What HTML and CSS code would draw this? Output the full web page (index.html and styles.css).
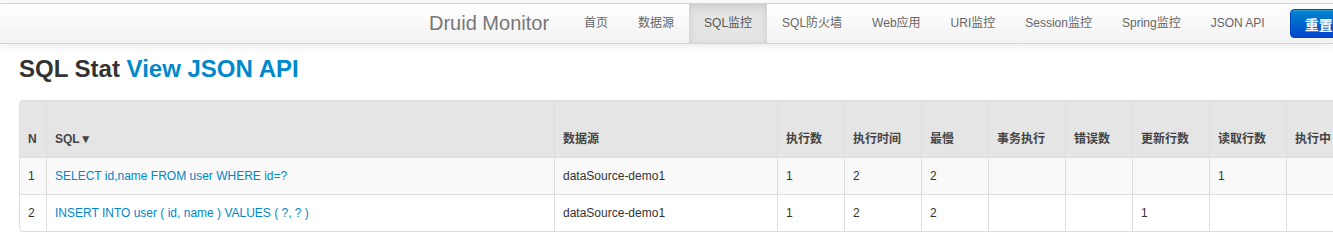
FILE: index.html
```html
<!DOCTYPE html>
<html lang="zh">

<head>
    <meta charset="UTF-8">
    <title>Druid Monitor - SQL Stat</title>
    <link rel="stylesheet" href="styles.css">
</head>

<body>
    <!-- Top navigation bar -->
    <div class="navbar">
        <a class="brand" href="#">Druid Monitor</a>
        <ul class="nav">
            <li><a href="#">首页</a></li>
            <li><a href="#">数据源</a></li>
            <li class="active"><a href="#">SQL监控</a></li>
            <li><a href="#">SQL防火墙</a></li>
            <li><a href="#">Web应用</a></li>
            <li><a href="#">URI监控</a></li>
            <li><a href="#">Session监控</a></li>
            <li><a href="#">Spring监控</a></li>
            <li><a href="#">JSON API</a></li>
        </ul>
        <button type="button" class="btn-primary">重置</button>
    </div>

    <div class="container">
        <h3 class="page-title">SQL Stat <a href="#">View JSON API</a></h3>

        <div class="table-wrap">
            <table class="stat-table">
                <colgroup>
                    <col class="w-n">
                    <col class="w-sql">
                    <col class="w-ds">
                    <col class="w-s">
                    <col class="w-m">
                    <col class="w-s">
                    <col class="w-m">
                    <col class="w-s">
                    <col class="w-m">
                    <col class="w-m">
                    <col class="w-m">
                    <col class="w-m">
                    <col class="w-m">
                </colgroup>
                <thead>
                    <tr>
                        <th>N</th>
                        <th>SQL▼</th>
                        <th>数据源</th>
                        <th>执行数</th>
                        <th>执行时间</th>
                        <th>最慢</th>
                        <th>事务执行</th>
                        <th>错误数</th>
                        <th>更新行数</th>
                        <th>读取行数</th>
                        <th>执行中</th>
                        <th>最大并发</th>
                        <th>执行分布</th>
                    </tr>
                </thead>
                <tbody>
                    <tr>
                        <td>1</td>
                        <td><a href="#">SELECT id,name FROM user WHERE id=?</a></td>
                        <td>dataSource-demo1</td>
                        <td>1</td>
                        <td>2</td>
                        <td>2</td>
                        <td></td>
                        <td></td>
                        <td></td>
                        <td>1</td>
                        <td></td>
                        <td></td>
                        <td></td>
                    </tr>
                    <tr>
                        <td>2</td>
                        <td><a href="#">INSERT INTO user ( id, name ) VALUES ( ?, ? )</a></td>
                        <td>dataSource-demo1</td>
                        <td>1</td>
                        <td>2</td>
                        <td>2</td>
                        <td></td>
                        <td></td>
                        <td>1</td>
                        <td></td>
                        <td></td>
                        <td></td>
                        <td></td>
                    </tr>
                </tbody>
            </table>
        </div>
    </div>
</body>

</html>
```

FILE: styles.css
```css
html,
body {
    overflow: hidden;
}

body {
    margin: 0;
    padding-top: 3px;
    font-family: 'Liberation Sans', 'Noto Sans CJK SC', sans-serif;
    font-size: 12px;
    line-height: 20px;
    color: #333;
    background-color: #fff;
}

a {
    color: #0088cc;
    text-decoration: none;
}

/* navbar */
.navbar {
    display: flex;
    align-items: center;
    height: 39px;
    padding-left: 409px;
    background-image: linear-gradient(to bottom, #ffffff, #f2f2f2);
    border-top: 1px solid #d4d4d4;
    border-bottom: 1px solid #d4d4d4;
    box-shadow: 0 1px 10px rgba(0, 0, 0, 0.1);
    white-space: nowrap;
    overflow: hidden;
    position: relative;
}

.brand {
    padding: 0 20px;
    font-size: 20px;
    line-height: 39px;
    font-weight: 200;
    color: #777;
}

.nav {
    display: flex;
    margin: 0;
    padding: 0;
    list-style: none;
    height: 39px;
}

.nav li a {
    display: block;
    padding: 0 15px;
    line-height: 39px;
    color: #666;
}

.nav li.active a {
    color: #555;
    background-color: #e5e5e5;
    box-shadow: inset 0 3px 8px rgba(0, 0, 0, 0.125);
}

.btn-primary {
    flex-shrink: 0;
    margin-left: 10px;
    height: 29px;
    padding: 0 14px;
    font-family: inherit;
    font-size: 14px;
    font-weight: bold;
    color: #fff;
    background-image: linear-gradient(to bottom, #0088cc, #0044cc);
    border: 1px solid #0044cc;
    border-radius: 4px;
    box-shadow: inset 0 1px 0 rgba(255, 255, 255, 0.2);
}

/* page */
.container {
    padding-left: 19px;
}

.page-title {
    margin: 5px 0 11px;
    font-size: 24px;
    line-height: 40px;
    font-weight: bold;
    color: #333;
}

.table-wrap {
    overflow: hidden;
}

.stat-table {
    table-layout: fixed;
    width: 1498px;
    border-collapse: separate;
    border-spacing: 0;
    border: 1px solid #dddddd;
    border-left: 0;
    border-radius: 4px;
}

.w-n { width: 27px; }
.w-sql { width: 508px; }
.w-ds { width: 223px; }
.w-s { width: 67px; }
.w-m { width: 77px; }

.stat-table th,
.stat-table td {
    padding: 8px;
    text-align: left;
    border-left: 1px solid #dddddd;
    white-space: nowrap;
    overflow: hidden;
}

.stat-table th {
    height: 40px;
    vertical-align: bottom;
    font-weight: bold;
    color: #444;
    background-color: #e5e5e5;
}

.stat-table td {
    border-top: 1px solid #dddddd;
    vertical-align: top;
}

.stat-table tbody tr:nth-child(odd) td {
    background-color: #f9f9f9;
}

.stat-table thead tr th:first-child {
    border-top-left-radius: 4px;
}

.stat-table tbody tr:last-child td:first-child {
    border-bottom-left-radius: 4px;
}
```
